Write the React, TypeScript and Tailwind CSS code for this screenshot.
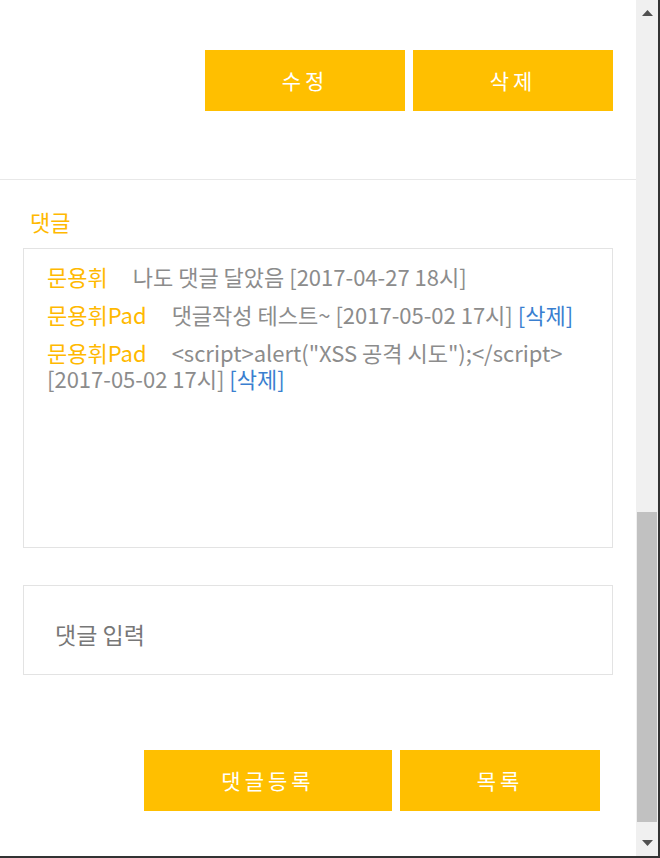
import React from 'react';

const comments = [
  { name: '문용휘', text: '나도 댓글 달았음', date: '[2017-04-27 18시]', canDelete: false },
  { name: '문용휘Pad', text: '댓글작성 테스트~', date: '[2017-05-02 17시]', canDelete: true },
  { name: '문용휘Pad', text: '<script>alert("XSS 공격 시도");</script>', date: '[2017-05-02 17시]', canDelete: true },
];

const font = { fontFamily: '"Noto Sans CJK KR", "Noto Sans", sans-serif' };

const YellowButton = ({ label, width }: { label: string; width: string }) => (
  <button
    className={`${width} h-[61px] bg-[#ffbf00] text-white text-[21px] tracking-[4px] font-normal`}
  >
    {label}
  </button>
);

const Scrollbar = () => (
  <div className="w-[22px] bg-[#f0f0f0] flex flex-col">
    <div className="h-[26px] flex justify-center pt-[10px]">
      <svg width="11" height="6" viewBox="0 0 11 6">
        <polygon points="5.5,0 11,6 0,6" fill="#505050" />
      </svg>
    </div>
    <div className="h-[486px]" />
    <div className="h-[310px] mx-[1px] bg-[#c1c1c1]" />
    <div className="flex-1 flex justify-center items-end pb-[10px]">
      <svg width="11" height="6" viewBox="0 0 11 6">
        <polygon points="0,0 11,0 5.5,6" fill="#505050" />
      </svg>
    </div>
  </div>
);

export default function App() {
  return (
    <div className="w-[660px] h-[858px] overflow-hidden bg-white border-r-2 border-b-2 border-[#333]" style={font}>
      <div className="flex h-full">
        <div className="flex-1">
          {/* Post actions */}
          <div className="pt-[50px] pb-[68px] pr-[23px] flex justify-end gap-[8px]">
            <YellowButton label="수정" width="w-[200px]" />
            <YellowButton label="삭제" width="w-[200px]" />
          </div>

          {/* Comments */}
          <div className="border-t border-[#e8e8e8] px-[23px] pt-[26px]">
            <h3 className="pl-[7px] h-[30px] leading-[30px] text-[22px] text-[#ffb900] mb-[12px]">댓글</h3>

            <div className="h-[300px] border border-[#e3e3e3] px-[23px] pt-[14px] text-[22px] leading-[26px] text-[#8c8c8c]">
              {comments.map((c, i) => (
                <p key={i} className="mb-[12px]">
                  <span className="text-[#ffb900] mr-[25px]">{c.name}</span>
                  {c.text} <span className="whitespace-nowrap">{c.date}</span>
                  {c.canDelete && <> <span className="text-[#3a7fd0]">[삭제]</span></>}
                </p>
              ))}
            </div>

            <div className="mt-[37px] h-[90px] border border-[#e3e3e3]">
              <input
                className="w-full h-full pl-[31px] pt-[8px] text-[23px] text-[#555] placeholder:text-[#777] outline-none"
                placeholder="댓글 입력"
              />
            </div>

            <div className="mt-[75px] pr-[13px] flex justify-end gap-[8px]">
              <YellowButton label="댓글등록" width="w-[248px]" />
              <YellowButton label="목록" width="w-[200px]" />
            </div>
          </div>
        </div>
        <Scrollbar />
      </div>
    </div>
  );
}
